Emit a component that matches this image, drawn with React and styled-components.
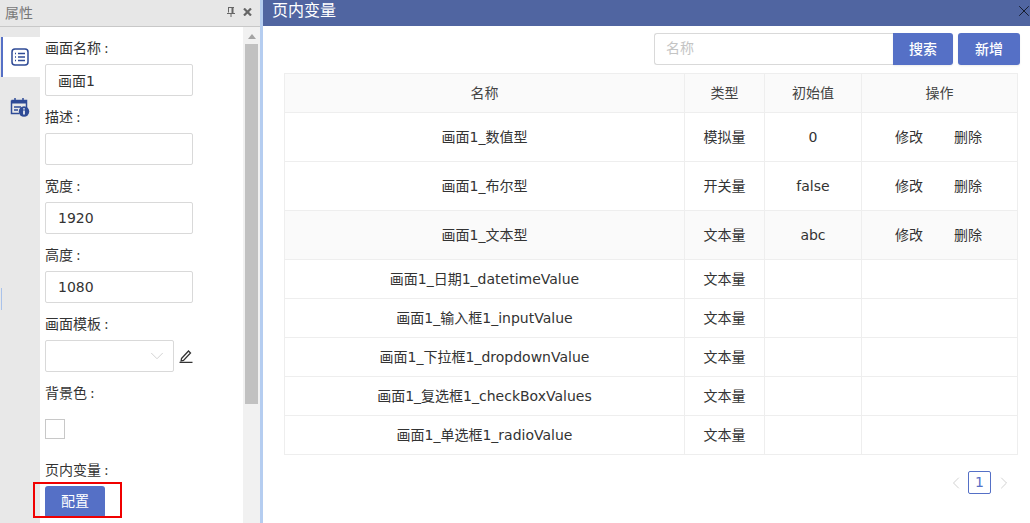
import React from "react";
import styled, { createGlobalStyle } from "styled-components";
import { ChevronDown, ChevronLeft, ChevronRight, X } from "lucide-react";

const GlobalStyle = createGlobalStyle`
  html, body {
    margin: 0;
    padding: 0;
    background: #fff;
    overflow: hidden;
  }
  * {
    box-sizing: border-box;
  }
  body {
    font-family: "DejaVu Sans", "Noto Sans CJK SC", sans-serif;
    font-size: 14px;
    color: #333;
  }
`;

const Page = styled.div`
  position: relative;
  display: flex;
  width: 1030px;
  height: 523px;
  overflow: hidden;
`;

const Side = styled.aside`
  display: flex;
  flex-direction: column;
  flex: 0 0 260px;
  height: 100%;
`;

const SideHeader = styled.div`
  display: flex;
  align-items: center;
  justify-content: space-between;
  flex: 0 0 27px;
  padding: 0 8px 3px 5px;
  background: #e7e7e7;
  border-bottom: 1px solid #c8c8c8;
  color: #777;
`;

const HeaderIcons = styled.div`
  display: flex;
  align-items: center;
  gap: 8px;
  color: #666;
`;

const SideBody = styled.div`
  display: flex;
  flex: 1;
  min-height: 0;
`;

const TabRail = styled.div`
  position: relative;
  display: flex;
  flex-direction: column;
  gap: 10px;
  flex: 0 0 40px;
  padding-top: 10px;
  background: #e8e8e8;
`;

const RailTick = styled.div`
  position: absolute;
  left: 1px;
  top: 261px;
  width: 1px;
  height: 22px;
  background: #a9c2ea;
`;

const Tab = styled.div`
  display: flex;
  align-items: center;
  justify-content: center;
  height: 40px;
  margin-left: 1px;
  padding-right: 4px;
  color: #2f4b96;
  background: ${(p) => (p.$active ? "#fff" : "transparent")};
  border-left: 2px solid ${(p) => (p.$active ? "#5570c6" : "transparent")};
`;

const Form = styled.div`
  flex: 0 0 203px;
  padding: 11px 0 0 5px;
  background: #fff;
`;

const Label = styled.div`
  height: 26px;
  line-height: 20px;
  color: #333;
`;

const Colon = styled.span`
  margin-left: 3px;
`;

const Field = styled.div`
  display: flex;
  align-items: center;
  width: 148px;
  height: 32px;
  margin-bottom: 11px;
  padding: 0 0 1px 12px;
  border: 1px solid #d9d9d9;
  border-radius: 2px;
  color: #333;
`;

const SelectRow = styled.div`
  display: flex;
  align-items: center;
  gap: 5px;
  margin-bottom: 11px;
`;

const Select = styled.div`
  display: flex;
  align-items: center;
  justify-content: flex-end;
  width: 129px;
  height: 32px;
  padding-right: 5px;
  border: 1px solid #d9d9d9;
  border-radius: 2px;
  color: #cfcfcf;
`;

const Swatch = styled.div`
  width: 20px;
  height: 20px;
  margin: 10px 0 21px;
  border: 1px solid #c8c8c8;
`;

const ConfigButton = styled.button`
  display: block;
  width: 60px;
  height: 32px;
  padding: 0 0 4px;
  border: none;
  border-radius: 3px;
  background: #5570c6;
  color: #fff;
  font: inherit;
`;

const Scrollbar = styled.div`
  display: flex;
  flex-direction: column;
  flex: 0 0 17px;
  background: #f1f1f1;
  padding-left: 2px;
`;

const ScrollArrow = styled.div`
  width: 0;
  height: 0;
  margin: 7px 0 5px 3px;
  border-left: 4px solid transparent;
  border-right: 4px solid transparent;
  border-bottom: 5px solid #a3a3a3;
`;

const ScrollThumb = styled.div`
  width: 13px;
  height: 360px;
  background: #c1c1c1;
`;

const Splitter = styled.div`
  flex: 0 0 3px;
  background: #b5cdf0;
`;

const Main = styled.main`
  display: flex;
  flex-direction: column;
  flex: 1;
  min-width: 0;
`;

const MainHeader = styled.div`
  display: flex;
  align-items: center;
  justify-content: space-between;
  flex: 0 0 26px;
  height: 26px;
  padding: 0 0 5px 9px;
  background: #5065a1;
  color: #fff;
  font-size: 16px;
  line-height: 20px;
`;

const CloseMark = styled.span`
  display: flex;
  margin-right: -3px;
  color: #161c2c;
`;

const Toolbar = styled.div`
  display: flex;
  justify-content: flex-end;
  padding: 7px 10px 8px 0;
`;

const SearchInput = styled.div`
  display: flex;
  align-items: center;
  width: 239px;
  height: 32px;
  padding: 0 0 4px 11px;
  border: 1px solid #d9d9d9;
  border-right: none;
  border-radius: 3px 0 0 3px;
  color: #c4c4c4;
`;

const ToolButton = styled.button`
  width: ${(p) => p.$width}px;
  height: 32px;
  margin-left: ${(p) => p.$gap || 0}px;
  padding: 0 0 3px;
  border: none;
  border-radius: ${(p) => (p.$joined ? "0 3px 3px 0" : "3px")};
  background: #5570c6;
  box-shadow: 0 1px 2px rgba(0, 0, 0, 0.08);
  color: #fff;
  font: inherit;
  font-weight: 500;
`;

const TableWrap = styled.div`
  width: 733px;
  margin-left: 21px;
`;

const Table = styled.table`
  width: 733px;
  table-layout: fixed;
  border-collapse: collapse;
  border: 1px solid #eee;
  text-align: center;
`;

const HeadRow = styled.tr`
  height: 39px;
  background: #fafafa;
`;

const Row = styled.tr`
  height: ${(p) => (p.$tall ? 49 : 39)}px;
  background: ${(p) => (p.$shade ? "#fafafa" : "#fff")};
`;

const Cell = styled.td`
  padding: 0 0 ${(p) => (p.$latin ? 0 : 2)}px;
  border: 1px solid #eee;
  color: #333;
`;

const HeadCell = styled.th`
  padding: 0 0 2px;
  border: 1px solid #eee;
  color: #444;
  font-weight: 400;
`;

const Actions = styled.div`
  display: flex;
  justify-content: center;
  gap: 31px;
  padding-right: 2px;
`;

const Pager = styled.div`
  display: flex;
  align-items: center;
  justify-content: flex-end;
  margin-top: 16px;
  padding-right: 3px;
  color: #c8c8c8;
`;

const PageNumber = styled.div`
  width: 23px;
  height: 23px;
  margin: 0 3px 0 2px;
  line-height: 20px;
  border: 1px solid #5570c6;
  border-radius: 2px;
  color: #5570c6;
  text-align: center;
`;

const Highlight = styled.div`
  position: absolute;
  left: 33px;
  top: 482px;
  width: 89px;
  height: 36px;
  border: 2px solid #f00000;
`;

const ListIcon = () => (
  <svg width="18" height="18" viewBox="0 0 18 18" fill="none" stroke="currentColor" strokeWidth="1.5">
    <rect x="1" y="1" width="16" height="16" rx="3" />
    <path d="M4 5.5h1M7 5.5h7M4 9h1M7 9h7M4 12.5h1M7 12.5h7" />
  </svg>
);

const CalendarInfoIcon = () => (
  <svg width="20" height="20" viewBox="0 0 20 20" fill="none">
    <path d="M1.5 3.5h15v8M1.5 3.5v13h8" stroke="currentColor" strokeWidth="1.5" />
    <path d="M1.5 3.5h15v3h-15z" fill="currentColor" />
    <path d="M5 1v3M13 1v3" stroke="currentColor" strokeWidth="1.5" />
    <path d="M4 10h7M4 13h4" stroke="currentColor" strokeWidth="1.3" />
    <circle cx="14" cy="14.5" r="5.2" fill="currentColor" />
    <path d="M14 13.5v4M14 11.2v1.2" stroke="#fff" strokeWidth="1.6" />
  </svg>
);

const PinIcon = () => (
  <svg width="8" height="10" viewBox="0 0 8 10" fill="none" stroke="currentColor" strokeWidth="1">
    <path d="M1 .5h6M1.5 .5v5M0 6.5h8M4 7v3" />
    <path d="M5.5 .5v6" strokeWidth="2" />
  </svg>
);

const CloseIcon = () => (
  <svg width="9" height="8" viewBox="0 0 9 8" fill="none" stroke="currentColor" strokeWidth="2.2">
    <path d="M1 .5 8 7.5M8 .5 1 7.5" />
  </svg>
);

const EditIcon = () => (
  <svg width="14" height="14" viewBox="0 0 14 14" fill="none" stroke="#333" strokeWidth="1.3">
    <path d="M2.5 9.5 9.5 2l2 2-7 7.5-2.4.5z" />
    <path d="M0.5 13.4h13" />
  </svg>
);

const rows = [
  { name: "画面1_数值型", type: "模拟量", init: "0", actions: true },
  { name: "画面1_布尔型", type: "开关量", init: "false", actions: true },
  { name: "画面1_文本型", type: "文本量", init: "abc", actions: true, shade: true },
  { name: "画面1_日期1_datetimeValue", type: "文本量" },
  { name: "画面1_输入框1_inputValue", type: "文本量" },
  { name: "画面1_下拉框1_dropdownValue", type: "文本量" },
  { name: "画面1_复选框1_checkBoxValues", type: "文本量" },
  { name: "画面1_单选框1_radioValue", type: "文本量" },
];

export default function App() {
  return (
    <Page>
      <GlobalStyle />
      <Side>
        <SideHeader>
          属性
          <HeaderIcons>
            <PinIcon />
            <CloseIcon />
          </HeaderIcons>
        </SideHeader>
        <SideBody>
          <TabRail>
            <Tab $active>
              <ListIcon />
            </Tab>
            <Tab>
              <CalendarInfoIcon />
            </Tab>
            <RailTick />
          </TabRail>
          <Form>
            <Label>画面名称<Colon>:</Colon></Label>
            <Field>画面1</Field>
            <Label>描述<Colon>:</Colon></Label>
            <Field />
            <Label>宽度<Colon>:</Colon></Label>
            <Field>1920</Field>
            <Label>高度<Colon>:</Colon></Label>
            <Field>1080</Field>
            <Label>画面模板<Colon>:</Colon></Label>
            <SelectRow>
              <Select>
                <ChevronDown size={22} strokeWidth={1} />
              </Select>
              <EditIcon />
            </SelectRow>
            <Label>背景色<Colon>:</Colon></Label>
            <Swatch />
            <Label>页内变量<Colon>:</Colon></Label>
            <ConfigButton>配置</ConfigButton>
          </Form>
          <Scrollbar>
            <ScrollArrow />
            <ScrollThumb />
          </Scrollbar>
        </SideBody>
      </Side>
      <Splitter />
      <Main>
        <MainHeader>
          页内变量
          <CloseMark>
            <X size={18} strokeWidth={1.3} />
          </CloseMark>
        </MainHeader>
        <Toolbar>
          <SearchInput>名称</SearchInput>
          <ToolButton $width={60} $joined>搜索</ToolButton>
          <ToolButton $width={62} $gap={5}>新增</ToolButton>
        </Toolbar>
        <TableWrap>
          <Table>
            <colgroup>
              <col style={{ width: 400 }} />
              <col style={{ width: 80 }} />
              <col style={{ width: 97 }} />
              <col style={{ width: 156 }} />
            </colgroup>
            <thead>
              <HeadRow>
                <HeadCell>名称</HeadCell>
                <HeadCell>类型</HeadCell>
                <HeadCell>初始值</HeadCell>
                <HeadCell>操作</HeadCell>
              </HeadRow>
            </thead>
            <tbody>
              {rows.map((row) => (
                <Row key={row.name} $tall={row.actions} $shade={row.shade}>
                  <Cell>{row.name}</Cell>
                  <Cell>{row.type}</Cell>
                  <Cell $latin>{row.init}</Cell>
                  <Cell>
                    {row.actions && (
                      <Actions>
                        <span>修改</span>
                        <span>删除</span>
                      </Actions>
                    )}
                  </Cell>
                </Row>
              ))}
            </tbody>
          </Table>
          <Pager>
            <ChevronLeft size={20} strokeWidth={1} />
            <PageNumber>1</PageNumber>
            <ChevronRight size={20} strokeWidth={1} />
          </Pager>
        </TableWrap>
      </Main>
      <Highlight />
    </Page>
  );
}
